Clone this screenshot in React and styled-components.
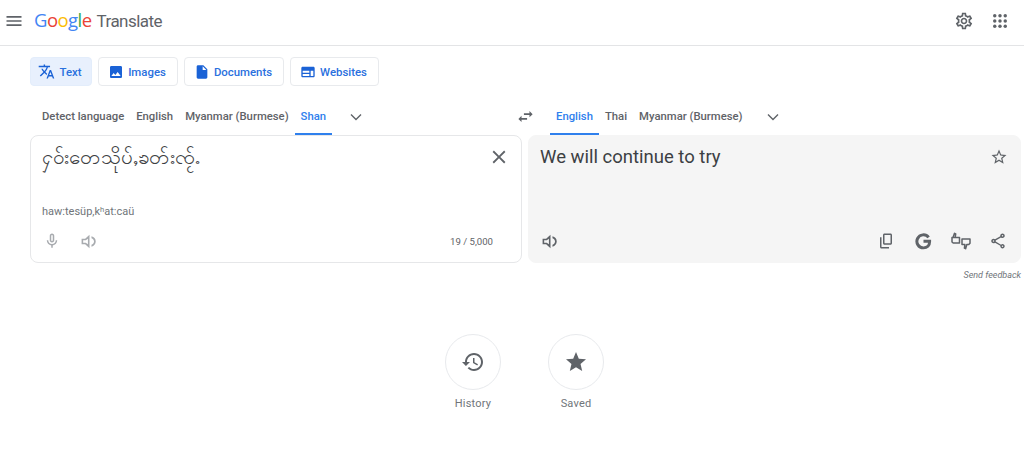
import styled, { createGlobalStyle } from 'styled-components';

const GlobalStyle = createGlobalStyle`
  html, body {
    margin: 0;
    padding: 0;
    background: #fff;
    font-family: Roboto, 'Liberation Sans', sans-serif;
    color: #5f6368;
  }
`;

const Page = styled.div`
  width: 1024px;
  height: 475px;
  overflow: hidden;
`;

const Header = styled.header`
  height: 41px;
  border-bottom: 1px solid #e3e4e6;
  display: flex;
  align-items: center;
  padding: 0 15px 4px 4px;
`;

const Logo = styled.div`
  display: flex;
  align-items: baseline;
  margin-left: 10px;
  font-size: 17px;
  letter-spacing: -0.55px;
  line-height: 24px;
`;

const GoogleWord = styled.span`
  font-family: 'Open Sans', sans-serif;
  font-size: 18.5px;
  letter-spacing: -0.55px;
  margin-right: 5px;
`;

const Letter = styled.span`
  color: ${(p) => p.$c};
`;

const HeaderRight = styled.div`
  margin-left: auto;
  display: flex;
  align-items: center;
  gap: 17px;
`;

const Main = styled.main`
  padding: 11px 3px 0 30px;
`;

const ModeTabs = styled.div`
  display: flex;
  gap: 6px;
`;

const ModeTab = styled.button`
  height: 29px;
  width: ${(p) => p.$w}px;
  display: flex;
  align-items: center;
  justify-content: center;
  gap: 4px;
  padding: 0 2px 0 0;
  border: 1px solid ${(p) => (p.$active ? '#e3edfb' : '#e8eaed')};
  border-radius: 4px;
  background: ${(p) => (p.$active ? '#e8f0fd' : '#fff')};
  color: #2a70de;
  font: 500 11.4px Roboto, sans-serif;
`;

const LangBar = styled.div`
  display: flex;
  height: 35px;
  margin-top: 14px;
`;

const LangSide = styled.div`
  display: flex;
  align-items: center;
  width: ${(p) => p.$w}px;
  padding-left: ${(p) => p.$pad}px;
  box-sizing: border-box;
`;

const LangTab = styled.div`
  height: 100%;
  box-sizing: border-box;
  padding: 0 6px;
  display: flex;
  align-items: center;
  font-size: 11.3px;
  font-weight: 500;
  white-space: nowrap;
  color: ${(p) => (p.$active ? '#2f80ed' : '#5f6368')};
  border-bottom: 2px solid ${(p) => (p.$active ? '#2f80ed' : 'transparent')};
`;

const Chevron = styled.svg`
  margin-left: ${(p) => p.$gap}px;
`;

const SwapSlot = styled.div`
  width: 26px;
  display: flex;
  align-items: center;
  justify-content: center;
  padding-bottom: 2px;
`;

const Panels = styled.div`
  display: grid;
  grid-template-columns: 492px 493px;
  gap: 6px;
`;

const Card = styled.section`
  height: 128px;
  box-sizing: border-box;
  border-radius: 8px;
  display: flex;
  flex-direction: column;
  background: ${(p) => (p.$filled ? '#f5f5f5' : '#fff')};
  border: 1px solid ${(p) => (p.$filled ? '#f5f5f5' : '#e6e7e9')};
  padding: 8px ${(p) => (p.$filled ? 12 : 11)}px 11px 11px;
`;

const TopLine = styled.div`
  display: flex;
  justify-content: space-between;
  align-items: center;
  height: 26px;
`;

const MainText = styled.div`
  font-size: ${(p) => p.$size}px;
  line-height: 26px;
  color: #3c4043;
  white-space: nowrap;
`;

const Romanized = styled.div`
  margin-top: 35px;
  font-size: 11px;
  line-height: 14px;
  color: #70757a;
`;

const BottomLine = styled.div`
  margin-top: auto;
  display: flex;
  align-items: center;
  height: 20px;
`;

const ActionGroup = styled.div`
  margin-left: auto;
  display: flex;
  align-items: center;
  gap: 17.3px;
`;

const IconSlot = styled.div`
  width: ${(p) => p.$w}px;
  display: flex;
  justify-content: center;
`;

const Counter = styled.span`
  margin-left: auto;
  margin-right: 17px;
  font-size: 9.6px;
  color: #5f6368;
`;

const Feedback = styled.div`
  text-align: right;
  margin-top: 7px;
  font-size: 9px;
  line-height: 11px;
  font-style: italic;
  color: #70757a;
`;

const Shortcuts = styled.div`
  display: flex;
  justify-content: center;
  gap: 47px;
  margin-top: 53px;
  padding-right: 2px;
`;

const Shortcut = styled.div`
  width: 56px;
  display: flex;
  flex-direction: column;
  align-items: center;
`;

const Circle = styled.div`
  width: 56px;
  height: 56px;
  box-sizing: border-box;
  border: 1px solid #e8eaed;
  border-radius: 50%;
  display: flex;
  align-items: center;
  justify-content: center;
`;

const ShortcutLabel = styled.div`
  margin-top: 7px;
  font-size: 11px;
  line-height: 14px;
  letter-spacing: 0.2px;
  color: #70757a;
`;

const Icon = ({ d, size = 18, color = '#5f6368', children }) => (
  <svg width={size} height={size} viewBox="0 0 24 24" fill={color} aria-hidden="true">
    {d ? <path d={d} /> : children}
  </svg>
);

const paths = {
  menu: 'M3 18h18v-2H3v2zm0-5h18v-2H3v2zm0-7v2h18V6H3z',
  translate:
    'M12.87 15.07l-2.54-2.51.03-.03c1.74-1.94 2.98-4.17 3.71-6.53H17V4h-7V2H8v2H1v1.99h11.17C11.5 7.92 10.44 9.75 9 11.35 8.07 10.32 7.3 9.19 6.69 8h-2c.73 1.63 1.73 3.17 2.98 4.56l-5.09 5.02L4 19l5-5 3.11 3.11.76-2.04zM18.5 10h-2L12 22h2l1.12-3h4.75L21 22h2l-4.5-12zm-2.62 7l1.62-4.33L19.12 17h-3.24z',
  image:
    'M21 19V5c0-1.1-.9-2-2-2H5c-1.1 0-2 .9-2 2v14c0 1.1.9 2 2 2h14c1.1 0 2-.9 2-2zM8.5 13.5l2.5 3.01L14.5 12l4.5 6H5l3.5-4.5z',
  doc: 'M14 2H6c-1.1 0-1.99.9-1.99 2L4 20c0 1.1.89 2 1.99 2H18c1.1 0 2-.9 2-2V8l-6-6zM13 9V3.5L18.5 9H13z',
  web: 'M20 4H4c-1.1 0-2 .9-2 2v12c0 1.1.9 2 2 2h16c1.1 0 2-.9 2-2V6c0-1.1-.9-2-2-2zM4 10h10v3H4v-3zm0 8v-3h10v3H4zm16 0h-4v-8h4v8z',
  gear:
    'M19.43 12.98c.04-.32.07-.64.07-.98s-.03-.66-.07-.98l2.11-1.65c.19-.15.24-.42.12-.64l-2-3.46c-.12-.22-.39-.3-.61-.22l-2.49 1c-.52-.4-1.08-.73-1.69-.98l-.38-2.65C14.46 2.18 14.25 2 14 2h-4c-.25 0-.46.18-.49.42l-.38 2.65c-.61.25-1.17.59-1.69.98l-2.49-1c-.23-.09-.49 0-.61.22l-2 3.46c-.13.22-.07.49.12.64l2.11 1.65c-.04.32-.07.65-.07.98s.03.66.07.98l-2.11 1.65c-.19.15-.24.42-.12.64l2 3.46c.12.22.39.3.61.22l2.49-1c.52.4 1.08.73 1.69.98l.38 2.65c.03.24.24.42.49.42h4c.25 0 .46-.18.49-.42l.38-2.65c.61-.25 1.17-.59 1.69-.98l2.49 1c.23.09.49 0 .61-.22l2-3.46c.12-.22.07-.49-.12-.64l-2.11-1.65zM17.45 11.27c.04.31.05.52.05.73s-.02.43-.05.73l-.14 1.13.89.7 1.08.84-.7 1.21-1.27-.51-1.04-.42-.9.68c-.43.32-.84.56-1.25.73l-1.06.43-.16 1.13-.2 1.35h-1.4l-.19-1.35-.16-1.13-1.06-.43c-.43-.18-.83-.41-1.23-.71l-.91-.7-1.06.43-1.27.51-.7-1.21 1.08-.84.89-.7-.14-1.13c-.03-.31-.05-.54-.05-.74s.02-.43.05-.73l.14-1.13-.89-.7-1.08-.84.7-1.21 1.27.51 1.04.42.9-.68c.43-.32.84-.56 1.25-.73l1.06-.43.16-1.13.2-1.35h1.39l.19 1.35.16 1.13 1.06.43c.43.18.83.41 1.23.71l.91.7 1.06-.43 1.27-.51.7 1.21-1.07.85-.89.7.14 1.13zM12 8c-2.21 0-4 1.79-4 4s1.79 4 4 4 4-1.79 4-4-1.79-4-4-4zm0 6c-1.1 0-2-.9-2-2s.9-2 2-2 2 .9 2 2-.9 2-2 2z',
  swap: 'M6.99 11L3 15l3.99 4v-3H14v-2H6.99v-3zM21 9l-3.99-4v3H10v2h7.01v3L21 9z',
  close:
    'M19 6.41L17.59 5 12 10.59 6.41 5 5 6.41 10.59 12 5 17.59 6.41 19 12 13.41 17.59 19 19 17.59 13.41 12z',
  mic: 'M12 14c1.66 0 3-1.34 3-3V5c0-1.66-1.34-3-3-3S9 3.34 9 5v6c0 1.66 1.34 3 3 3zm-1-9c0-.55.45-1 1-1s1 .45 1 1v6c0 .55-.45 1-1 1s-1-.45-1-1V5zm6 6c0 2.76-2.24 5-5 5s-5-2.24-5-5H5c0 3.53 2.61 6.43 6 6.92V21h2v-3.08c3.39-.49 6-3.39 6-6.92h-2z',
  volume:
    'M2 8.5v7h4.5l5.5 5V3.5l-5.5 5H2zm8 .1v6.8L7.3 13.5H4v-3h3.3L10 8.6zM14.5 5.5v2.3c1.9.7 3.2 2.3 3.2 4.2s-1.3 3.5-3.2 4.2v2.3c3.1-.8 5.4-3.3 5.4-6.5s-2.3-5.7-5.4-6.5z',
  starOutline:
    'M22 9.24l-7.19-.62L12 2 9.19 8.63 2 9.24l5.46 4.73L5.82 21 12 17.27 18.18 21l-1.63-7.03L22 9.24zM12 15.4l-3.76 2.27 1-4.28-3.32-2.88 4.38-.38L12 6.1l1.71 4.04 4.38.38-3.32 2.88 1 4.28L12 15.4z',
  star: 'M12 17.27L18.18 21l-1.64-7.03L22 9.24l-7.19-.61L12 2 9.19 8.63 2 9.24l5.46 4.73L5.82 21z',
  history:
    'M13 3c-4.97 0-9 4.03-9 9H1l3.89 3.89.07.14L9 12H6c0-3.87 3.13-7 7-7s7 3.13 7 7-3.13 7-7 7c-1.93 0-3.68-.79-4.94-2.06l-1.42 1.42C8.27 19.99 10.51 21 13 21c4.97 0 9-4.03 9-9s-4.03-9-9-9zm-1 5v5l4.28 2.54.72-1.21-3.5-2.08V8H12z',
  copy: 'M10 2h8c1.1 0 2 .9 2 2v11c0 1.1-.9 2-2 2h-8c-1.1 0-2-.9-2-2V4c0-1.1.9-2 2-2zm0 2v11h8V4h-8zM4 7h2v13h10v2H6c-1.1 0-2-.9-2-2V7z',
  share:
    'M18 16.08c-.76 0-1.44.3-1.96.77L8.91 12.7c.05-.23.09-.46.09-.7s-.04-.47-.09-.7l7.05-4.11c.54.5 1.25.81 2.04.81 1.66 0 3-1.34 3-3s-1.34-3-3-3-3 1.34-3 3c0 .24.04.47.09.7L8.04 9.81C7.5 9.31 6.79 9 6 9c-1.66 0-3 1.34-3 3s1.34 3 3 3c.79 0 1.5-.31 2.04-.81l7.12 4.16c-.05.21-.08.43-.08.65 0 1.61 1.31 2.92 2.92 2.92 1.61 0 2.92-1.31 2.92-2.92s-1.31-2.92-2.92-2.92zM18 4c.55 0 1 .45 1 1s-.45 1-1 1-1-.45-1-1 .45-1 1-1zM6 13c-.55 0-1-.45-1-1s.45-1 1-1 1 .45 1 1-.45 1-1 1zm12 7.02c-.55 0-1-.45-1-1s.45-1 1-1 1 .45 1 1-.45 1-1 1z',
};

const AppsIcon = () => (
  <Icon size={18}>
    {[5, 12, 19].flatMap((y) =>
      [5, 12, 19].map((x) => <circle key={`${x}-${y}`} cx={x} cy={y} r="2.3" />)
    )}
  </Icon>
);

const GIcon = () => (
  <svg width="17" height="17" viewBox="0 0 24 24" fill="none" stroke="#5f6368" strokeWidth="4.2" aria-hidden="true">
    <path d="M19.2 6.2A9.2 9.2 0 1 0 12 21c5.2 0 8.6-3.4 8.6-8.6V11.6H12" />
  </svg>
);

const ThumbsIcon = () => (
  <svg width="20" height="18" viewBox="0 0 20 18" fill="none" stroke="#5f6368" strokeWidth="1.5" strokeLinejoin="round" aria-hidden="true">
    <path d="M1 5.5h7.5V11H2.2L1 10V5.5zM2 5.5l1.5-4.2 1.2.7-.5 3.5" />
    <path d="M11 7h8v4.2l-1.2 1.3h-2l-1.2 4.2-1.2-.7.5-3.5H11V7z" />
  </svg>
);

const ChevronDown = ({ gap }) => (
  <Chevron $gap={gap} width="14" height="14" viewBox="0 0 14 14" fill="none" stroke="#5f6368" strokeWidth="1.4" aria-hidden="true">
    <path d="M2 3.5L7 8.5l5-5" />
  </Chevron>
);

const GOOGLE = [
  ['G', '#4285f4'],
  ['o', '#ea4335'],
  ['o', '#fbbc05'],
  ['g', '#4285f4'],
  ['l', '#34a853'],
  ['e', '#ea4335'],
];

const MODES = [
  { label: 'Text', icon: paths.translate, w: 62, active: true, size: 17 },
  { label: 'Images', icon: paths.image, w: 80, size: 16 },
  { label: 'Documents', icon: paths.doc, w: 100, size: 16 },
  { label: 'Websites', icon: paths.web, w: 89, size: 16 },
];

const App = () => (
  <Page>
    <GlobalStyle />
    <Header>
      <Icon d={paths.menu} size={20} />
      <Logo>
        <GoogleWord>
          {GOOGLE.map(([ch, c], i) => (
            <Letter key={i} $c={c}>{ch}</Letter>
          ))}
        </GoogleWord>
        Translate
      </Logo>
      <HeaderRight>
        <Icon d={paths.gear} size={20} />
        <AppsIcon />
      </HeaderRight>
    </Header>
    <Main>
      <ModeTabs>
        {MODES.map((m) => (
          <ModeTab key={m.label} $w={m.w} $active={m.active}>
            <Icon d={m.icon} size={m.size} color="#1a62d6" />
            {m.label}
          </ModeTab>
        ))}
      </ModeTabs>
      <LangBar>
        <LangSide $w={482} $pad={6}>
          <LangTab>Detect language</LangTab>
          <LangTab>English</LangTab>
          <LangTab>Myanmar (Burmese)</LangTab>
          <LangTab $active>Shan</LangTab>
          <ChevronDown gap={17} />
        </LangSide>
        <SwapSlot>
          <Icon d={paths.swap} size={19} />
        </SwapSlot>
        <LangSide $w={400} $pad={12}>
          <LangTab $active>English</LangTab>
          <LangTab>Thai</LangTab>
          <LangTab>Myanmar (Burmese)</LangTab>
          <ChevronDown gap={17} />
        </LangSide>
      </LangBar>
      <Panels>
        <Card>
          <TopLine>
            <MainText $size={20.6}>ႁဝ်းတေသိုပ်ႇၶတ်းၸႂ်ႉ</MainText>
            <Icon d={paths.close} size={22} />
          </TopLine>
          <Romanized>haw:tesüp,kʰat:caü</Romanized>
          <BottomLine>
            <IconSlot $w={20}>
              <Icon d={paths.mic} size={18} color="#a8abaf" />
            </IconSlot>
            <IconSlot $w={54}>
              <Icon d={paths.volume} size={19} color="#a8abaf" />
            </IconSlot>
            <Counter>19 / 5,000</Counter>
          </BottomLine>
        </Card>
        <Card $filled>
          <TopLine>
            <MainText $size={18.5}>We will continue to try</MainText>
            <Icon d={paths.starOutline} size={18} />
          </TopLine>
          <BottomLine>
            <IconSlot $w={20}>
              <Icon d={paths.volume} size={19} />
            </IconSlot>
            <ActionGroup>
              <IconSlot $w={20}>
                <Icon d={paths.copy} size={18} />
              </IconSlot>
              <IconSlot $w={20}>
                <GIcon />
              </IconSlot>
              <IconSlot $w={20}>
                <ThumbsIcon />
              </IconSlot>
              <IconSlot $w={20}>
                <Icon d={paths.share} size={18} />
              </IconSlot>
            </ActionGroup>
          </BottomLine>
        </Card>
      </Panels>
      <Feedback>Send feedback</Feedback>
      <Shortcuts>
        <Shortcut>
          <Circle>
            <Icon d={paths.history} size={24} />
          </Circle>
          <ShortcutLabel>History</ShortcutLabel>
        </Shortcut>
        <Shortcut>
          <Circle>
            <Icon d={paths.star} size={24} />
          </Circle>
          <ShortcutLabel>Saved</ShortcutLabel>
        </Shortcut>
      </Shortcuts>
    </Main>
  </Page>
);

export default App;
